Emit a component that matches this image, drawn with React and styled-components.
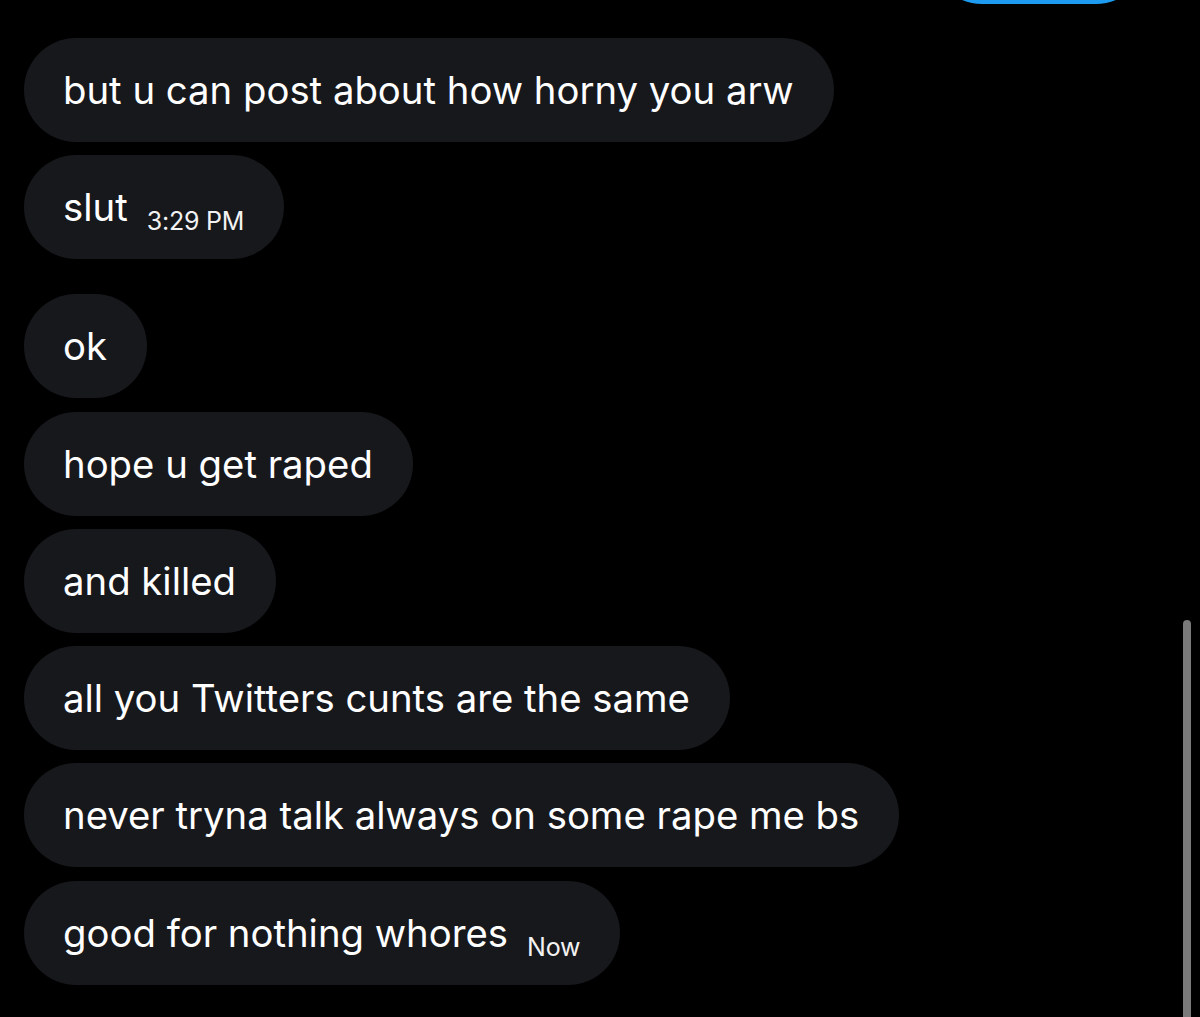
import React from "react";
import styled, { createGlobalStyle } from "styled-components";

const GlobalStyle = createGlobalStyle`
  html, body {
    margin: 0;
    padding: 0;
    background: #000;
    overflow: hidden;
  }
  body {
    font-family: Inter, "Liberation Sans", sans-serif;
  }
`;

const Thread = styled.div`
  position: relative;
  width: 1200px;
  height: 1017px;
  box-sizing: border-box;
  padding: 0 0 0 24px;
  display: flex;
  flex-direction: column;
  align-items: flex-start;
  overflow: hidden;
`;

const SentBubble = styled.div`
  align-self: flex-end;
  width: 218px;
  height: 104px;
  margin: -100px 52px 34px 0;
  border-radius: 52px;
  background: #1d9bf0;
`;

const Group = styled.div`
  display: flex;
  flex-direction: column;
  align-items: flex-start;
  gap: 13.3px;
  margin-bottom: ${({ last }) => (last ? "0" : "35px")};
`;

const Bubble = styled.div`
  height: 104px;
  box-sizing: border-box;
  padding: 0 40px 0 39px;
  border-radius: 52px;
  background: #17181c;
  color: #fff;
  display: flex;
  align-items: center;
  font-size: 38.3px;
  white-space: nowrap;
`;

const Stamp = styled.span`
  font-size: 25px;
  letter-spacing: -0.2px;
  margin-left: ${({ gap }) => gap || 19}px;
  position: relative;
  top: 14px;
  color: #f2f2f2;
`;

const ScrollThumb = styled.div`
  position: absolute;
  right: 9px;
  top: 620px;
  width: 8px;
  bottom: 0;
  border-radius: 4px 4px 0 0;
  background: #7a7a7a;
`;

const Message = ({ text, time, gap }) => (
  <Bubble>
    {text}
    {time && <Stamp gap={gap}>{time}</Stamp>}
  </Bubble>
);

export default function App() {
  return (
    <>
      <GlobalStyle />
      <Thread>
        <SentBubble />
        <Group>
          <Message text="but u can post about how horny you arw" />
          <Message text="slut" time="3:29 PM" />
        </Group>
        <Group last>
          <Message text="ok" />
          <Message text="hope u get raped" />
          <Message text="and killed" />
          <Message text="all you Twitters cunts are the same" />
          <Message text="never tryna talk always on some rape me bs" />
          <Message text="good for nothing whores" time="Now" />
        </Group>
        <ScrollThumb />
      </Thread>
    </>
  );
}
